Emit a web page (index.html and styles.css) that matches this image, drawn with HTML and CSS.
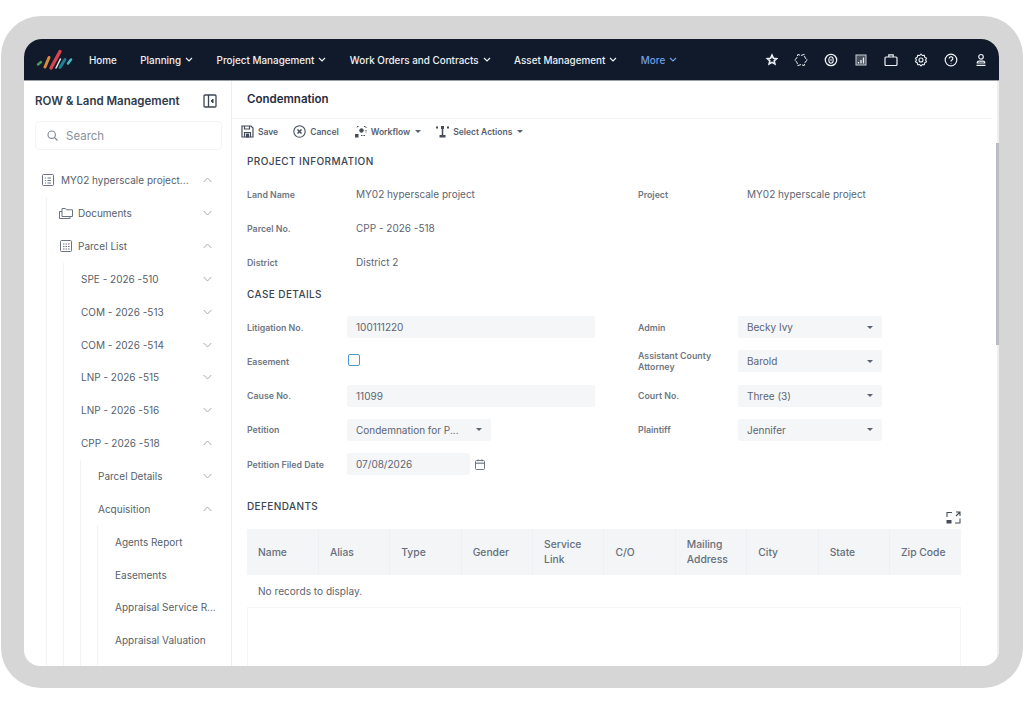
FILE: index.html
```html
<!DOCTYPE html>
<html lang="en">
<head>
    <meta charset="UTF-8">
    <meta name="viewport" content="width=device-width, initial-scale=1.0">
    <title>Condemnation</title>
    <link rel="stylesheet" href="styles.css">
</head>
<body>
    <div class="frame">
        <div class="screen">
            <!-- Top navigation -->
            <nav class="navbar">
                <svg class="logo" width="38" height="24" viewBox="0 0 38 24" fill="none" stroke-linecap="round">
                    <path d="M3 16.500L6 14" stroke="#4c9a5c" stroke-width="2.400"/>
                    <path d="M10 19L14 9.500" stroke="#d98a3d" stroke-width="3"/>
                    <path d="M16 20L25 3.500" stroke="#d8434f" stroke-width="3.400"/>
                    <path d="M21 20L25.500 11" stroke="#e6e6e6" stroke-width="1.500"/>
                    <path d="M25 19.500L30 11.500" stroke="#1f7f95" stroke-width="3"/>
                    <path d="M33 15.500L36 11.500" stroke="#48b6c4" stroke-width="2.600"/>
                </svg>
                <a class="nav-link">Home</a>
                <a class="nav-link">Planning <svg class="nav-caret" viewBox="0 0 8 5"><path d="M1 1l3 3 3-3"/></svg></a>
                <a class="nav-link">Project Management <svg class="nav-caret" viewBox="0 0 8 5"><path d="M1 1l3 3 3-3"/></svg></a>
                <a class="nav-link">Work Orders and Contracts <svg class="nav-caret" viewBox="0 0 8 5"><path d="M1 1l3 3 3-3"/></svg></a>
                <a class="nav-link">Asset Management <svg class="nav-caret" viewBox="0 0 8 5"><path d="M1 1l3 3 3-3"/></svg></a>
                <a class="nav-link nav-more">More <svg class="nav-caret" viewBox="0 0 8 5"><path d="M1 1l3 3 3-3"/></svg></a>
                <div class="nav-icons">
                    <svg viewBox="0 0 14 14"><path d="M8 2.200l1.400 3 3.200.4-2.400 2.200.7 3.200L8 9.400 5.100 11l.7-3.200-2.400-2.200 3.200-.4z" stroke-width="1.600"/></svg>
                    <svg viewBox="0 0 14 14"><path d="M13.400 7l-2.420 2.300-.78 3.240L7 11.600l-3.200.94-.78-3.240L.6 7l2.420-2.300.78-3.240L7 2.400l3.200-.94.78 3.240z" stroke-dasharray="4 1" stroke-width="1"/></svg>
                    <svg viewBox="0 0 14 14"><circle cx="7" cy="7" r="5.700" stroke-width="1.300"/><ellipse cx="7" cy="7" rx="2.200" ry="3.200" stroke-width="1.100"/><path d="M7 5.800v2.400" stroke-width="1"/></svg>
                    <svg viewBox="0 0 14 14"><rect x="2" y="2" width="10" height="10" stroke="#c9cdd3" stroke-width="1" fill="#4a525e"/><path d="M4.500 10.500V9M7 10.500V7M9.500 10.500v-6" stroke-width="1.300"/></svg>
                    <svg viewBox="0 0 14 14"><rect x="1" y="4" width="12" height="8.500" rx="1" stroke-width="1.200"/><path d="M4.800 4V1.800h4.400V4" stroke-width="1.200"/></svg>
                    <svg viewBox="0 0 14 14"><path d="M7 1l1.300 1.500 2-.2.400 1.900 1.800 1L11.600 7l.9 1.800-1.800 1-.4 1.900-2-.2L7 13l-1.300-1.500-2 .2-.4-1.900-1.800-1L2.400 7l-.9-1.800 1.800-1 .4-1.900 2 .2z" stroke-width="1.100"/><circle cx="7" cy="7" r="2" stroke-width="1.100"/></svg>
                    <svg viewBox="0 0 14 14"><circle cx="7" cy="7" r="5.800" stroke-width="1.200"/><path d="M5.200 5.500a1.800 1.800 0 1 1 2.700 1.600c-.6.300-.9.700-.9 1.300M7 10v.6" stroke-width="1.200"/></svg>
                    <svg viewBox="0 0 14 14"><circle cx="7" cy="3.800" r="2.300" stroke-width="1.200"/><path d="M3.200 10c0-1.400.8-1.900 2-1.900h3.600c1.200 0 2 .5 2 1.900z" stroke-width="1.100"/><path d="M2.500 12.300h9" stroke-width="1.300"/></svg>
                </div>
            </nav>

            <div class="workspace">
                <!-- Left tree -->
                <aside class="sidebar">
                    <div class="sidebar-head">
                        <span class="sidebar-title">ROW &amp; Land Management</span>
                        <svg width="14" height="14" viewBox="0 0 14 14" fill="none" stroke="#3c4654"><rect x="1" y="1" width="12" height="12" rx="1" stroke-width="1.300"/><path d="M5.500 1v12" stroke-width="1.300"/><path d="M10 5L8 7l2 2z" fill="#3c4654"/></svg>
                    </div>
                    <div class="search-box">
                        <svg width="11" height="11" viewBox="0 0 11 11" fill="none" stroke="#7d8590" stroke-width="1.100"><circle cx="4.700" cy="4.700" r="3.700"/><path d="M7.500 7.500l3 3"/></svg>
                        <span>Search</span>
                    </div>
                    <div class="tree">
                        <div class="tree-row">
                            <svg class="tree-icon" viewBox="0 0 12 12"><rect x=".5" y=".5" width="11" height="11" rx="1"/><path d="M3 4h1M5.500 4H9M3 6.500h1M5.500 6.500H9M3 9h1M5.500 9H9"/></svg>
                            <span class="tree-text">MY02 hyperscale project...</span>
                            <svg class="chev" viewBox="0 0 9 6"><path d="M.7 5L4.500 1l3.800 4"/></svg>
                        </div>
                        <div class="tree-level">
                            <div class="tree-row">
                                <svg class="tree-icon tree-icon-wide" viewBox="0 0 14 12"><path d="M3 3V1.500h3.500l1 1.300H13.500V9.500H3zM3 4.500H.5v7h10.500V9.500"/></svg>
                                <span class="tree-text">Documents</span>
                                <svg class="chev" viewBox="0 0 9 6"><path d="M.7 1l3.800 4 3.800-4"/></svg>
                            </div>
                            <div class="tree-row">
                                <svg class="tree-icon" viewBox="0 0 12 12"><rect x=".5" y=".5" width="11" height="11" rx="1"/><path d="M3 4h1.500M5.500 4H7M8 4h1.500M3 6.500h1.500M5.500 6.500H7M8 6.500h1.500M3 9h1.500M5.500 9H7M8 9h1.500"/></svg>
                                <span class="tree-text">Parcel List</span>
                                <svg class="chev" viewBox="0 0 9 6"><path d="M.7 5L4.500 1l3.800 4"/></svg>
                            </div>
                            <div class="tree-level">
                                <div class="tree-row"><span class="tree-text">SPE - 2026 -510</span><svg class="chev" viewBox="0 0 9 6"><path d="M.7 1l3.800 4 3.800-4"/></svg></div>
                                <div class="tree-row"><span class="tree-text">COM - 2026 -513</span><svg class="chev" viewBox="0 0 9 6"><path d="M.7 1l3.800 4 3.800-4"/></svg></div>
                                <div class="tree-row"><span class="tree-text">COM - 2026 -514</span><svg class="chev" viewBox="0 0 9 6"><path d="M.7 1l3.800 4 3.800-4"/></svg></div>
                                <div class="tree-row"><span class="tree-text">LNP - 2026 -515</span><svg class="chev" viewBox="0 0 9 6"><path d="M.7 1l3.800 4 3.800-4"/></svg></div>
                                <div class="tree-row"><span class="tree-text">LNP - 2026 -516</span><svg class="chev" viewBox="0 0 9 6"><path d="M.7 1l3.800 4 3.800-4"/></svg></div>
                                <div class="tree-row"><span class="tree-text">CPP - 2026 -518</span><svg class="chev" viewBox="0 0 9 6"><path d="M.7 5L4.500 1l3.800 4"/></svg></div>
                                <div class="tree-level">
                                    <div class="tree-row"><span class="tree-text">Parcel Details</span><svg class="chev" viewBox="0 0 9 6"><path d="M.7 1l3.800 4 3.800-4"/></svg></div>
                                    <div class="tree-row"><span class="tree-text">Acquisition</span><svg class="chev" viewBox="0 0 9 6"><path d="M.7 5L4.500 1l3.800 4"/></svg></div>
                                    <div class="tree-level">
                                        <div class="tree-row"><span class="tree-text">Agents Report</span></div>
                                        <div class="tree-row"><span class="tree-text">Easements</span></div>
                                        <div class="tree-row"><span class="tree-text">Appraisal Service R...</span></div>
                                        <div class="tree-row"><span class="tree-text">Appraisal Valuation</span></div>
                                        <div class="tree-row"></div>
                                    </div>
                                </div>
                            </div>
                        </div>
                    </div>
                </aside>

                <!-- Main form -->
                <main class="content">
                    <h1 class="page-title">Condemnation</h1>
                    <div class="toolbar">
                        <span class="tool">
                            <svg width="13" height="13" viewBox="0 0 13 13" fill="none" stroke="#444d59" stroke-width="1.200"><path d="M1 1h9l2 2v9H1z"/><path d="M3.500 1v3h5V1M3.500 12V7.500h6V12"/><path d="M5.500 9h2v3h-2z" fill="#444d59"/></svg>
                            Save
                        </span>
                        <span class="tool">
                            <svg width="13" height="13" viewBox="0 0 13 13" fill="none" stroke="#444d59"><circle cx="6.500" cy="6.500" r="5.700" stroke-width="1.100"/><path d="M4.500 4.500l4 4M8.500 4.500l-4 4" stroke-width="1.500"/></svg>
                            Cancel
                        </span>
                        <span class="tool">
                            <svg width="13" height="13" viewBox="0 0 13 13" fill="none" stroke="#444d59" stroke-width="1"><path d="M4.500 1.500H3V3M10 1.500h2V3M12 5v3M11 10.500H6" stroke-dasharray="1.500 1"/><circle cx="7.500" cy="5.500" r="1.800" fill="#444d59"/><rect x="1" y="9" width="3.500" height="3.500" fill="#444d59" stroke="none"/></svg>
                            Workflow <i class="tool-caret"></i>
                        </span>
                        <span class="tool">
                            <svg width="13" height="13" viewBox="0 0 13 13" fill="#444d59" stroke="#444d59"><rect x="0" y="1.500" width="2" height="2" stroke="none"/><rect x="11" y="1.500" width="2" height="2" stroke="none"/><rect x="5" y="1" width="3" height="3" stroke="none"/><rect x="3.500" y="10" width="6" height="2.500" stroke="none"/><path d="M6.500 4v6" fill="none" stroke-width="1.500"/></svg>
                            Select Actions <i class="tool-caret"></i>
                        </span>
                    </div>

                    <h2 class="section-title">PROJECT INFORMATION</h2>
                    <div class="form-grid form-info">
                        <label>Land Name</label><div class="value">MY02 hyperscale project</div>
                        <label>Project</label><div class="value">MY02 hyperscale project</div>
                        <label>Parcel No.</label><div class="value">CPP - 2026 -518</div>
                        <span></span><span></span>
                        <label>District</label><div class="value">District 2</div>
                    </div>

                    <h2 class="section-title section-case">CASE DETAILS</h2>
                    <div class="form-grid form-case">
                        <label>Litigation No.</label><div class="field field-long">100111220</div>
                        <label>Admin</label><div class="field field-select">Becky Ivy<i class="caret"></i></div>
                        <label>Easement</label><div><span class="checkbox"></span></div>
                        <label>Assistant County Attorney</label><div class="field field-select">Barold<i class="caret"></i></div>
                        <label>Cause No.</label><div class="field field-long">11099</div>
                        <label>Court No.</label><div class="field field-select">Three (3)<i class="caret"></i></div>
                        <label>Petition</label><div class="field field-select">Condemnation for P...<i class="caret"></i></div>
                        <label>Plaintiff</label><div class="field field-select">Jennifer<i class="caret"></i></div>
                        <label>Petition Filed Date</label>
                        <div class="date-wrap">
                            <div class="field field-date">07/08/2026</div>
                            <svg width="10" height="11" viewBox="0 0 10 11" fill="none" stroke="#6f7884"><rect x=".5" y="1.500" width="9" height="9" rx="1"/><path d="M.5 4.200h9" stroke-width="1.200"/><path d="M3 .3v2M7 .3v2"/></svg>
                        </div>
                    </div>

                    <div class="defendants-head">
                        <h2 class="section-title">DEFENDANTS</h2>
                        <svg width="15" height="13" viewBox="0 0 15 13" fill="none" stroke="#444d59" stroke-width="1.100"><path d="M1 6V1.500h5M9 12h5V7.500"/><path d="M10 1h4v4M14 1l-4 4"/><rect x=".5" y="9" width="5" height="3.500" fill="#444d59" stroke="none"/></svg>
                    </div>
                    <table class="grid">
                        <thead>
                            <tr>
                                <th>Name</th><th>Alias</th><th>Type</th><th>Gender</th><th>Service Link</th>
                                <th>C/O</th><th>Mailing Address</th><th>City</th><th>State</th><th>Zip Code</th>
                            </tr>
                        </thead>
                        <tbody>
                            <tr><td colspan="10">No records to display.</td></tr>
                        </tbody>
                    </table>
                    <div class="grid-empty"></div>
                </main>
            </div>
            <div class="scroll-thumb"></div>
        </div>
    </div>
</body>
</html>
```

FILE: styles.css
```css
* {
    box-sizing: border-box;
}

html, body {
    height: 100%;
}

body {
    margin: 0;
    background-color: #fff;
    font-family: Inter, 'Noto Sans', sans-serif;
    color: #4b5563;
    overflow: hidden;
}

/* Device frame */
.frame {
    width: 1022px;
    height: 672px;
    margin: 16px 0 0 1px;
    padding: 23px 24px 22px 23px;
    background-color: #d6d6d6;
    border-radius: 40px;
}

.screen {
    position: relative;
    height: 100%;
    display: flex;
    flex-direction: column;
    background-color: #fff;
    border-radius: 18px 18px 16px 16px;
    overflow: hidden;
}

/* Navbar */
.navbar {
    flex: none;
    height: 42px;
    display: flex;
    align-items: center;
    gap: 23.400px;
    padding-left: 11px;
    background-color: #101a2a;
    border-bottom: 1px solid #9aa0a8;
}

.logo {
    margin-right: -7.400px;
}

.nav-link {
    display: flex;
    align-items: center;
    gap: 4px;
    color: #eef1f5;
    font-size: 9.900px;
    font-weight: 500;
    white-space: nowrap;
}

.nav-more {
    color: #6f9fe6;
}

.nav-caret {
    width: 8px;
    height: 5px;
    fill: none;
    stroke: currentColor;
    stroke-width: 1.200;
}

.nav-icons {
    margin-left: auto;
    display: flex;
    align-items: center;
    gap: 16px;
    padding-right: 11px;
}

.nav-icons svg {
    width: 14px;
    height: 14px;
    fill: none;
    stroke: #eef1f5;
}

/* Sidebar */
.workspace {
    flex: 1;
    min-height: 0;
    display: flex;
    border-right: 2px solid #efefef;
}

.sidebar {
    flex: none;
    width: 208px;
    padding: 0 9px 0 11px;
    border-right: 1px solid #eceef1;
}

.sidebar-head {
    height: 40px;
    display: flex;
    align-items: center;
    justify-content: space-between;
    padding-right: 5px;
}

.sidebar-title {
    color: #2f3a4a;
    font-size: 11.500px;
    font-weight: 600;
}

.search-box {
    height: 29px;
    display: flex;
    align-items: center;
    gap: 8px;
    padding-left: 11px;
    border: 1px solid #f3f4f6;
    border-radius: 4px;
    color: #8a919b;
    font-size: 11.500px;
}

.tree {
    margin-top: 14px;
}

.tree-row {
    height: 32.850px;
    display: flex;
    align-items: center;
    gap: 6px;
    padding-right: 10px;
    font-size: 10px;
    white-space: nowrap;
}

.tree > .tree-row {
    gap: 7px;
    padding-left: 7px;
}

.tree-level {
    margin-left: 16px;
    border-left: 1px solid #f1f2f4;
}

.tree > .tree-level {
    margin-left: 11px;
}

.tree-level > .tree-row {
    padding-left: 17px;
}

.tree > .tree-level > .tree-row {
    padding-left: 13px;
}

.tree-icon {
    flex: none;
    width: 12px;
    height: 12px;
    fill: none;
    stroke: #6b7480;
}

.tree-icon-wide {
    width: 14px;
    margin: 0 -1px;
}

.tree-text {
    flex: 1;
    color: #565f6c;
}

.chev {
    flex: none;
    width: 9px;
    height: 6px;
    fill: none;
    stroke: #a4aab2;
}

/* Main area */
.content {
    flex: 1;
    min-width: 0;
    padding-left: 15px;
    padding-right: 36px;
    overflow: hidden;
}

.page-title {
    height: 38px;
    margin: 0 -32px 0 -15px;
    padding: 0 0 2px 15px;
    display: flex;
    align-items: center;
    border-bottom: 1px solid #f3f4f6;
    color: #1f2c3d;
    font-size: 11.500px;
    font-weight: 600;
}

.toolbar {
    height: 25px;
    margin-left: -6px;
    display: flex;
    align-items: center;
    gap: 15px;
}

.tool {
    display: flex;
    align-items: center;
    gap: 4px;
    color: #566070;
    font-size: 8.500px;
    font-weight: 600;
}

.tool-caret {
    width: 0;
    height: 0;
    margin-left: 1px;
    border-left: 3px solid transparent;
    border-right: 3px solid transparent;
    border-top: 3px solid #566070;
}

.section-title {
    height: 20px;
    margin: 7px 0 0;
    display: flex;
    align-items: center;
    color: #3a4452;
    font-size: 10px;
    font-weight: 500;
    letter-spacing: .4px;
}

.section-case {
    margin-top: 5px;
}

/* Form rows */
.form-grid {
    display: grid;
    grid-template-columns: 100px 291px 100px 1fr;
    grid-auto-rows: 34px;
    align-items: center;
    margin-top: 6px;
}

.form-case {
    grid-auto-rows: 34.250px;
}

.form-grid label {
    color: #6f7783;
    font-size: 8.800px;
    font-weight: 600;
    line-height: 11px;
}

.value {
    padding-left: 9px;
    font-size: 10px;
    color: #5c6572;
}

.field {
    height: 22px;
    display: flex;
    align-items: center;
    justify-content: space-between;
    padding: 0 9px;
    background-color: #f5f6f8;
    border-radius: 2px;
    color: #5c6572;
    font-size: 10px;
}

.field-long {
    width: 248px;
}

.field-select {
    width: 144px;
}

.field-date {
    width: 123px;
}

.caret {
    width: 0;
    height: 0;
    border-left: 3px solid transparent;
    border-right: 3px solid transparent;
    border-top: 3px solid #596270;
}

.checkbox {
    display: block;
    width: 12px;
    height: 12px;
    margin: 0 0 3px 1px;
    border: 1.500px solid #4a9cc7;
    border-radius: 2px;
}

.date-wrap {
    display: flex;
    align-items: center;
    gap: 5px;
}

/* Defendants table */
.defendants-head {
    height: 33px;
    margin-top: 15px;
    display: flex;
    align-items: flex-end;
    justify-content: space-between;
    padding-bottom: 5px;
}

.defendants-head .section-title {
    margin: 0 0 8px;
}

.grid {
    width: 714px;
    border-collapse: collapse;
    table-layout: fixed;
}

.grid th {
    height: 46px;
    padding: 0 11px;
    background-color: #f3f5f7;
    border-right: 1px solid #eef0f3;
    color: #676f7c;
    font-size: 10.300px;
    font-weight: 500;
    line-height: 15px;
    text-align: left;
}

.grid th:last-child {
    border-right: none;
}

.grid td {
    height: 32px;
    padding: 0 11px;
    color: #5c6572;
    font-size: 10.100px;
}

.grid-empty {
    width: 714px;
    height: 100px;
    border: 1px solid #f5f6f8;
}

.scroll-thumb {
    position: absolute;
    top: 104px;
    right: 0;
    width: 3px;
    height: 202px;
    background-color: #b9bdc3;
}
```
